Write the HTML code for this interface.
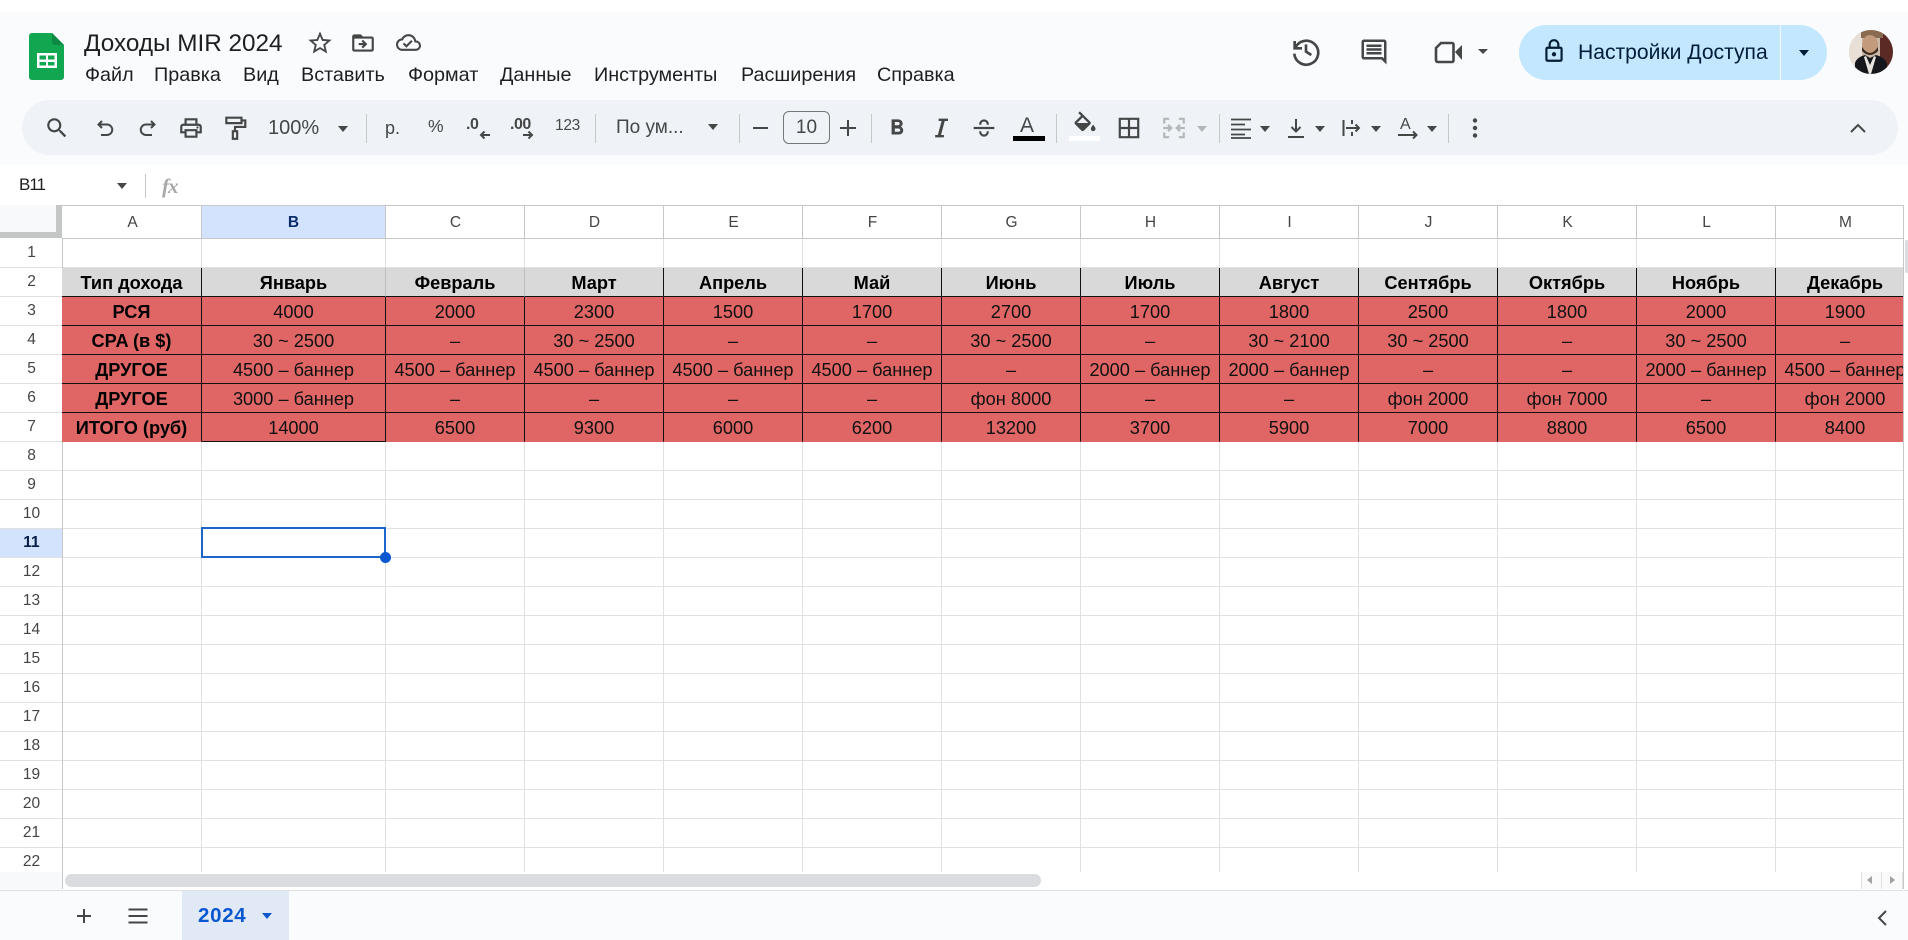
<!DOCTYPE html>
<html lang="ru">
<head>
<meta charset="utf-8">
<title>Доходы MIR 2024</title>
<style>
html,body{margin:0;padding:0;background:#fff}
body{position:relative;width:1908px;height:940px;overflow:hidden;font-family:"Liberation Sans",Arial,sans-serif;color:#1f1f1f}
.a,.i,.t,.c,.s{position:absolute}
.t{white-space:nowrap}
.c{width:0;height:0;border-left:5.5px solid transparent;border-right:5.5px solid transparent;border-top:6px solid #444746}
.s{width:1px;height:29px;top:114px;background:#c7c7c7}
.i{fill:#444746}
.st{fill:none;stroke:#444746;stroke-width:2}
.m{font-size:19.8px;top:62px;color:#1f1f1f;line-height:26px}
.tb{font-size:20px;top:115px;line-height:26px;color:#444746}
#tw{position:absolute;left:62px;top:268px;width:1841px;height:174px;overflow:hidden}
table{border-collapse:separate;border-spacing:0;table-layout:fixed;width:1853px}
td{box-sizing:border-box;height:29px;padding:2px 0 0;text-align:center;font-size:18.2px;line-height:26px;white-space:nowrap;overflow:hidden;background:#e06666;color:#111;border-right:1px solid #111;border-bottom:1px solid #111}
tr.h td,td.b{font-weight:bold;color:#000}
tr.h td{background:#d9d9d9;padding-top:3px;line-height:25px}
tr.h td.l{border-right-color:#bdbdbd}
tr.e td{border-bottom-color:#e06666}
tr.e td.k{border-bottom-color:#111}
.rh{position:absolute;left:0;width:63px;height:29px;line-height:29px;text-align:center;font-size:15.5px;color:#444}
.ch{position:absolute;top:206px;height:32px;line-height:33px;text-align:center;font-size:15.5px;color:#444;width:141px}
</style>
</head>
<body>
<!-- header bg -->
<div class="a" style="left:0;top:12px;width:1908px;height:153px;background:#f9fbfd"></div>
<div class="a" style="left:22px;top:100px;width:1876px;height:55px;border-radius:28px;background:#eff3f8"></div>

<!-- sheets logo -->
<svg class="i" style="left:29px;top:33px" width="35" height="47" viewBox="0 0 35 47">
<path d="M3 0H23L35 12V44a3 3 0 0 1-3 3H3a3 3 0 0 1-3-3V3a3 3 0 0 1 3-3z" fill="#11a650"/>
<path d="M23 0L35 12H26a3 3 0 0 1-3-3z" fill="#0c8a43"/>
<path d="M8 20H28V35H8z M10.500 22.500V26.500H17V22.500z M19 22.500V26.500H25.500V22.500z M10.500 29V32.500H17V29z M19 29V32.500H25.500V29z" fill="#fff" fill-rule="evenodd"/>
</svg>

<div class="t" style="left:84px;top:28px;font-size:24.3px;line-height:32px;color:#1f1f1f">Доходы MIR 2024</div>
<svg class="i" style="left:306px;top:29px" width="28" height="28" viewBox="0 0 24 24"><path d="M22 9.240l-7.190-.620L12 2 9.190 8.630 2 9.240l5.460 4.730L5.820 21 12 17.270 18.180 21l-1.630-7.030L22 9.240zM12 15.400l-3.760 2.270 1-4.280-3.320-2.880 4.380-.380L12 6.100l1.710 4.040 4.380.380-3.320 2.880 1 4.280L12 15.400z"/></svg>
<svg class="i" style="left:350px;top:30px" width="26" height="26" viewBox="0 0 24 24"><path d="M20 6h-8l-2-2H4c-1.100 0-2 .9-2 2v12c0 1.100.9 2 2 2h16c1.100 0 2-.9 2-2V8c0-1.100-.9-2-2-2zm0 12H4V8h16v10zm-8.010-9l-1.410 1.410L12.160 12H8v2h4.160l-1.590 1.590L11.990 17 16 13.010 11.990 9z"/></svg>
<svg class="i" style="left:396px;top:30px" width="25" height="25" viewBox="0 0 24 24"><path d="M19.350 10.040C18.670 6.590 15.640 4 12 4 9.110 4 6.600 5.640 5.350 8.040 2.340 8.360 0 10.910 0 14c0 3.310 2.690 6 6 6h13c2.760 0 5-2.240 5-5 0-2.640-2.050-4.780-4.650-4.960zM19 18H6c-2.210 0-4-1.790-4-4 0-2.050 1.530-3.760 3.560-3.970l1.070-.110.5-.950C8.080 7.140 9.940 6 12 6c2.620 0 4.880 1.860 5.390 4.430l.3 1.500 1.530.110c1.560.1 2.780 1.410 2.780 2.960 0 1.650-1.350 3-3 3zm-9-3.820l-2.090-2.090L6.500 13.500 10 17l6.010-6.010-1.410-1.410z"/></svg>

<!-- menu -->
<div class="t m" style="left:85px">Файл</div>
<div class="t m" style="left:154px">Правка</div>
<div class="t m" style="left:243px">Вид</div>
<div class="t m" style="left:301px">Вставить</div>
<div class="t m" style="left:408px">Формат</div>
<div class="t m" style="left:500px">Данные</div>
<div class="t m" style="left:594px">Инструменты</div>
<div class="t m" style="left:741px">Расширения</div>
<div class="t m" style="left:877px">Справка</div>

<!-- top right -->
<svg class="i" style="left:1290px;top:35px" width="32" height="32" viewBox="0 0 24 24"><path class="st" stroke-width="2" d="M3.500 4.500V10H9M4 9.500A9 9 0 1 1 3.200 14"/><path class="st" d="M12 7v5.500l4 2.500"/></svg>
<svg class="i" style="left:1359px;top:37px" width="30" height="30" viewBox="0 0 24 24"><path d="M21.990 4c0-1.100-.89-2-1.990-2H4c-1.100 0-2 .9-2 2v12c0 1.100.9 2 2 2h14l4 4-.010-18zM20 4v13.170L18.830 16H4V4h16zM6 12h12v2H6zm0-3h12v2H6zm0-3h12v2H6z"/></svg>
<svg class="i" style="left:1434px;top:41px" width="29" height="23" viewBox="0 0 29 23"><path d="M2 7L7 2H18a1.500 1.500 0 0 1 1.500 1.500V19.500A1.500 1.500 0 0 1 18 21H4a2 2 0 0 1-2-2z" fill="none" stroke="#444746" stroke-width="2.600"/><path d="M21 11L28 4V19z"/></svg>
<div class="c" style="left:1478px;top:49px;border-top-width:5px"></div>

<div class="a" style="left:1519px;top:25px;width:308px;height:55px;border-radius:28px;background:#c2e7ff"></div>
<div class="a" style="left:1780px;top:25px;width:1px;height:55px;background:#f3faff"></div>
<svg class="i" style="left:1541px;top:38px;fill:#041e35" width="26" height="26" viewBox="0 0 24 24"><path d="M18 8h-1V6c0-2.760-2.240-5-5-5S7 3.240 7 6v2H6c-1.100 0-2 .9-2 2v10c0 1.100.9 2 2 2h12c1.100 0 2-.9 2-2V10c0-1.100-.9-2-2-2zM9 6c0-1.660 1.340-3 3-3s3 1.340 3 3v2H9V6zm9 14H6V10h12v10zm-6-3c1.100 0 2-.9 2-2s-.9-2-2-2-2 .9-2 2 .9 2 2 2z"/></svg>
<div class="t" style="left:1578px;top:40px;font-size:21.1px;line-height:26px;color:#001d35">Настройки Доступа</div>
<div class="c" style="left:1799px;top:50px;border-top-color:#001d35"></div>

<!-- avatar -->
<svg class="a" style="left:1849px;top:30px" width="44" height="44" viewBox="0 0 44 44">
<defs><clipPath id="av"><circle cx="22" cy="22" r="22"/></clipPath></defs>
<g clip-path="url(#av)">
<rect width="44" height="44" fill="#c9b8a6"/>
<rect x="0" y="0" width="13" height="44" fill="#e8e0d6"/>
<rect x="31" y="0" width="13" height="44" fill="#5b2a24"/>
<rect x="12" y="0" width="22" height="8" fill="#8a6a50"/>
<ellipse cx="21" cy="15" rx="8" ry="10" fill="#c49a7c"/>
<path d="M13 17q8 12 16 0v4q-8 8-16 0z" fill="#3b2a22"/>
<path d="M6 44V33q2-6 10-8l5 3 6-3q8 2 11 8V44z" fill="#15171c"/>
<path d="M17 26l4 9 4-9 2 1-5 17h-2L15 27z" fill="#e9e4df"/>
</g>
</svg>

<!-- toolbar -->
<svg class="i" style="left:44px;top:115px" width="26" height="26" viewBox="0 0 24 24"><path d="M15.500 14h-.79l-.28-.27C15.410 12.590 16 11.110 16 9.500 16 5.910 13.090 3 9.500 3S3 5.910 3 9.500 5.910 16 9.500 16c1.610 0 3.090-.59 4.230-1.570l.27.28v.79l5 4.990L20.490 19l-4.990-5zm-6 0C7.010 14 5 11.990 5 9.500S7.010 5 9.500 5 14 7.010 14 9.500 11.990 14 9.500 14z"/></svg>
<svg class="i" style="left:93px;top:116px" width="24" height="24" viewBox="0 0 24 24"><path class="st" d="M9 5L5.500 8.500 9 12M6 8.500H14a4.800 4.800 0 0 1 0 10.500H8"/></svg>
<svg class="i" style="left:136px;top:116px" width="24" height="24" viewBox="0 0 24 24"><path class="st" d="M15 5l3.500 3.500L15 12M18 8.500H10a4.800 4.800 0 0 0 0 10.500H16"/></svg>
<svg class="i" style="left:178px;top:115px" width="26" height="26" viewBox="0 0 24 24"><path d="M19 8h-1V3H6v5H5c-1.660 0-3 1.340-3 3v6h4v4h12v-4h4v-6c0-1.660-1.340-3-3-3zM8 5h8v3H8V5zm8 12v2H8v-4h8v2zm2-2v-2H6v2H4v-4c0-.55.45-1 1-1h14c.55 0 1 .45 1 1v4h-2z"/><circle cx="18" cy="11.500" r="1"/></svg>
<svg class="i" style="left:222px;top:115px" width="26" height="26" viewBox="0 0 24 24"><path class="st" d="M4 2.500H18V7.500H4zM18 5H21.500V11H12V15"/><rect class="st" x="10" y="15" width="4" height="7"/></svg>
<div class="t tb" style="left:268px">100%</div>
<div class="c" style="left:338px;top:126px"></div>
<div class="s" style="left:366px"></div>
<div class="t tb" style="left:385px;font-size:18px">р.</div>
<div class="t tb" style="left:428px;font-size:17.5px;top:113px">%</div>
<div class="t tb" style="left:466px;top:112px;font-size:16px;font-weight:bold;letter-spacing:-.5px">.0</div>
<svg class="i" style="left:479px;top:129px" width="12" height="12" viewBox="0 0 12 12"><path class="st" d="M11 6H2M5.500 2.500L2 6l3.500 3.500"/></svg>
<div class="t tb" style="left:510px;top:112px;font-size:16px;font-weight:bold;letter-spacing:-.5px">.00</div>
<svg class="i" style="left:522px;top:129px" width="12" height="12" viewBox="0 0 12 12"><path class="st" d="M1 6H10M6.500 2.500L10 6l-3.500 3.500"/></svg>
<div class="t tb" style="left:555px;top:113px;font-size:15.500px;letter-spacing:-.3px">123</div>
<div class="s" style="left:595px"></div>
<div class="t tb" style="left:616px;font-size:19px">По ум...</div>
<div class="c" style="left:708px;top:124px"></div>
<div class="s" style="left:739px"></div>
<div class="a" style="left:753px;top:127px;width:15px;height:2px;background:#444746"></div>
<div class="a" style="left:783px;top:111px;width:45px;height:31px;border:1px solid #747775;border-radius:6px;text-align:center;line-height:31px;font-size:19px;color:#444746">10</div>
<svg class="i" style="left:837px;top:117px" width="22" height="22" viewBox="0 0 22 22"><path class="st" d="M11 3V19M3 11H19"/></svg>
<div class="s" style="left:871px"></div>
<svg class="i" style="left:884px;top:115px" width="26" height="26" viewBox="0 0 24 24"><path d="M15.600 10.790c.97-.67 1.650-1.770 1.650-2.790 0-2.260-1.750-4-4-4H7v14h7.040c2.090 0 3.710-1.700 3.710-3.790 0-1.520-.86-2.820-2.150-3.420zM10 6.500h3c.83 0 1.500.67 1.500 1.500s-.67 1.500-1.500 1.500h-3v-3zm3.500 9H10v-3h3.500c.83 0 1.500.67 1.500 1.500s-.67 1.500-1.500 1.500z"/></svg>
<svg class="i" style="left:927px;top:114px" width="28" height="28" viewBox="0 0 24 24"><path d="M10 4v2h2.500l-3.200 12H7v2h7.500v-2H12l3.200-12H18V4z"/></svg>
<svg class="i" style="left:971px;top:115px" width="26" height="26" viewBox="0 0 24 24"><path class="st" d="M2.500 12H21.500M8.500 9V8.500A3.500 3.500 0 0 1 15.500 8.500V9M8.500 15v.5a3.500 3.500 0 0 0 7 0V15"/></svg>
<div class="t" style="left:1020px;top:114px;font-size:21px;line-height:24px;color:#444746">A</div>
<div class="a" style="left:1013px;top:136px;width:32px;height:5px;background:#000"></div>
<div class="s" style="left:1056px"></div>
<svg class="i" style="left:1071px;top:111px" width="28" height="24" viewBox="0 0 24 20"><path d="M16.560 8.940L7.620 0 6.210 1.410l2.380 2.380-5.150 5.150c-.59.59-.59 1.540 0 2.120l5.500 5.500c.29.29.68.44 1.060.44s.77-.15 1.060-.44l5.500-5.500c.59-.58.59-1.530 0-2.120zM5.210 10L10 5.210 14.790 10H5.210zM19 11.500s-2 2.170-2 3.500c0 1.100.9 2 2 2s2-.9 2-2c0-1.330-2-3.500-2-3.500z"/></svg>
<div class="a" style="left:1069px;top:136px;width:31px;height:5px;background:#fff"></div>
<svg class="i" style="left:1116px;top:115px" width="26" height="26" viewBox="0 0 24 24"><path class="st" d="M3.500 3.500H20.500V20.500H3.500zM12 3.500V20.500M3.500 12H20.500"/></svg>
<svg class="i" style="left:1161px;top:115px" width="26" height="26" viewBox="0 0 24 24"><path class="st" style="stroke:#b4b6b8" d="M3 8V3.500H7.500M16.500 3.500H21V8M3 16V20.500H7.500M16.500 20.500H21V16M2 12H9M6.500 9l3 3-3 3M22 12H15M17.500 9l-3 3 3 3"/></svg>
<div class="c" style="left:1197px;top:126px;border-top-color:#b4b6b8"></div>
<div class="s" style="left:1219px"></div>
<svg class="i" style="left:1229px;top:116px" width="24" height="24" viewBox="0 0 24 24"><path class="st" d="M2 3.500H22M2 8.500H16M2 13.500H22M2 18.500H16M2 22H22" style="stroke-width:1.800"/></svg>
<div class="c" style="left:1260px;top:126px"></div>
<svg class="i" style="left:1284px;top:116px" width="24" height="24" viewBox="0 0 24 24"><path class="st" d="M12 3V15.500M7.500 11l4.500 4.500 4.500-4.500M4 21H20"/></svg>
<div class="c" style="left:1315px;top:126px"></div>
<svg class="i" style="left:1339px;top:116px" width="24" height="24" viewBox="0 0 24 24"><path class="st" stroke-width="1.700" d="M4.500 4V20M13 4V8M13 16V20M7 12H20M16.500 8.500L20 12l-3.500 3.500"/></svg>
<div class="c" style="left:1371px;top:126px"></div>
<div class="t" style="left:1400px;top:115px;font-size:16px;line-height:20px;color:#444746">A</div>
<svg class="i" style="left:1396px;top:128px" width="24" height="14" viewBox="0 0 24 14"><path class="st" stroke-width="1.700" d="M2 7H20M17 3.500L20.500 7 17 10.500"/></svg>
<div class="c" style="left:1427px;top:126px"></div>
<div class="s" style="left:1448px"></div>
<svg class="i" style="left:1463px;top:116px" width="24" height="24" viewBox="0 0 24 24"><circle cx="12" cy="4.500" r="2.200"/><circle cx="12" cy="12" r="2.200"/><circle cx="12" cy="19.500" r="2.200"/></svg>
<svg class="i" style="left:1846px;top:116px" width="24" height="24" viewBox="0 0 24 24"><path class="st" stroke-width="2.400" d="M5 16l7-7 7 7"/></svg>

<!-- formula bar -->
<div class="t" style="left:19px;top:172px;font-size:17px;line-height:26px;letter-spacing:-1px;color:#1f1f1f">B11</div>
<div class="c" style="left:117px;top:183px"></div>
<div class="a" style="left:145px;top:174px;width:1px;height:24px;background:#c7c7c7"></div>
<div class="t" style="left:162px;top:172px;font-family:'Liberation Serif',serif;font-style:italic;font-weight:bold;font-size:21px;line-height:28px;color:#a8a8a8;letter-spacing:-1px">fx</div>

<!-- grid -->
<div class="a" style="left:202px;top:205px;width:183px;height:33px;background:#d3e3fd"></div>
<div class="a" style="left:0;top:205px;width:56px;height:27px;background:#f8f9fa"></div>
<div class="a" style="left:0;top:232px;width:62px;height:6px;background:#c4c7c5"></div>
<div class="a" style="left:56px;top:205px;width:6px;height:33px;background:#c4c7c5"></div>
<div class="a" style="left:0;top:528px;width:62px;height:29px;background:#d3e3fd"></div>

<svg class="a" style="left:0;top:0" width="1908" height="940" shape-rendering="crispEdges">
<path fill="none" stroke="#e1e1e1" d="M0 267.500H1903M0 296.500H62M0 325.500H62M0 354.500H62M0 383.500H62M0 412.500H62M0 441.500H1903M0 470.500H1903M0 499.500H1903M0 528.500H1903M0 557.500H1903M0 586.500H1903M0 615.500H1903M0 644.500H1903M0 673.500H1903M0 702.500H1903M0 731.500H1903M0 760.500H1903M0 789.500H1903M0 818.500H1903M0 847.500H1903"/>
<path fill="none" stroke="#e1e1e1" d="M201.500 238V872M385.500 238V872M524.500 238V872M663.500 238V872M802.500 238V872M941.500 238V872M1080.500 238V872M1219.500 238V872M1358.500 238V872M1497.500 238V872M1636.500 238V872M1775.500 238V872"/>
<path fill="none" stroke="#c7c7c7" d="M62.500 238V889M62 238.500H1903M62 205.500H1903M201.500 205V238M385.500 205V238M524.500 205V238M663.500 205V238M802.500 205V238M941.500 205V238M1080.500 205V238M1219.500 205V238M1358.500 205V238M1497.500 205V238M1636.500 205V238M1775.500 205V238M1903.500 205V889"/>
</svg>

<!-- col heads -->
<div class="ch" style="left:62px">A</div>
<div class="ch" style="left:202px;width:183px;font-weight:bold;color:#0b2e6b">B</div>
<div class="ch" style="left:385px">C</div>
<div class="ch" style="left:524px">D</div>
<div class="ch" style="left:663px">E</div>
<div class="ch" style="left:802px">F</div>
<div class="ch" style="left:941px">G</div>
<div class="ch" style="left:1080px">H</div>
<div class="ch" style="left:1219px">I</div>
<div class="ch" style="left:1358px">J</div>
<div class="ch" style="left:1497px">K</div>
<div class="ch" style="left:1636px">L</div>
<div class="ch" style="left:1775px">M</div>

<!-- row heads -->
<div class="rh" style="top:238px">1</div>
<div class="rh" style="top:267px">2</div>
<div class="rh" style="top:296px">3</div>
<div class="rh" style="top:325px">4</div>
<div class="rh" style="top:354px">5</div>
<div class="rh" style="top:383px">6</div>
<div class="rh" style="top:412px">7</div>
<div class="rh" style="top:441px">8</div>
<div class="rh" style="top:470px">9</div>
<div class="rh" style="top:499px">10</div>
<div class="rh" style="top:528px;font-weight:bold;color:#041e49">11</div>
<div class="rh" style="top:557px">12</div>
<div class="rh" style="top:586px">13</div>
<div class="rh" style="top:615px">14</div>
<div class="rh" style="top:644px">15</div>
<div class="rh" style="top:673px">16</div>
<div class="rh" style="top:702px">17</div>
<div class="rh" style="top:731px">18</div>
<div class="rh" style="top:760px">19</div>
<div class="rh" style="top:789px">20</div>
<div class="rh" style="top:818px">21</div>
<div class="rh" style="top:847px">22</div>

<!-- data -->
<div id="tw">
<table>
<colgroup><col style="width:140px"><col style="width:184px"><col span="11" style="width:139px"></colgroup>
<tr class="h"><td>Тип дохода</td><td class="l">Январь</td><td class="l">Февраль</td><td>Март</td><td>Апрель</td><td>Май</td><td>Июнь</td><td>Июль</td><td>Август</td><td>Сентябрь</td><td>Октябрь</td><td>Ноябрь</td><td>Декабрь</td></tr>
<tr><td class="b">РСЯ</td><td>4000</td><td>2000</td><td>2300</td><td>1500</td><td>1700</td><td>2700</td><td>1700</td><td>1800</td><td>2500</td><td>1800</td><td>2000</td><td>1900</td></tr>
<tr><td class="b">CPA (в $)</td><td>30 ~ 2500</td><td>–</td><td>30 ~ 2500</td><td>–</td><td>–</td><td>30 ~ 2500</td><td>–</td><td>30 ~ 2100</td><td>30 ~ 2500</td><td>–</td><td>30 ~ 2500</td><td>–</td></tr>
<tr><td class="b">ДРУГОЕ</td><td>4500 – баннер</td><td>4500 – баннер</td><td>4500 – баннер</td><td>4500 – баннер</td><td>4500 – баннер</td><td>–</td><td>2000 – баннер</td><td>2000 – баннер</td><td>–</td><td>–</td><td>2000 – баннер</td><td>4500 – баннер</td></tr>
<tr><td class="b">ДРУГОЕ</td><td>3000 – баннер</td><td>–</td><td>–</td><td>–</td><td>–</td><td>фон 8000</td><td>–</td><td>–</td><td>фон 2000</td><td>фон 7000</td><td>–</td><td>фон 2000</td></tr>
<tr class="e"><td class="b">ИТОГО (руб)</td><td class="k">14000</td><td>6500</td><td>9300</td><td>6000</td><td>6200</td><td>13200</td><td>3700</td><td>5900</td><td>7000</td><td>8800</td><td>6500</td><td>8400</td></tr>
</table>
</div>

<!-- selection -->
<div class="a" style="left:201px;top:527px;width:185px;height:31px;box-sizing:border-box;border:2px solid #1a66c9"></div>
<div class="a" style="left:380px;top:552px;width:11px;height:11px;border-radius:50%;background:#0b57d0;border:0"></div>

<!-- scrollbars -->
<div class="a" style="left:63px;top:872px;width:1840px;height:18px;background:#fff"></div>
<div class="a" style="left:0;top:872px;width:62px;height:18px;background:#f8f9fa"></div>
<div class="a" style="left:65px;top:874px;width:976px;height:13px;border-radius:7px;background:#dadce0"></div>
<div class="a" style="left:1861px;top:872px;width:21px;height:17px;box-sizing:border-box;border-left:1px solid #e1e1e1;border-right:1px solid #e1e1e1;background:#fafafa"></div>
<div class="a" style="left:1882px;top:872px;width:21px;height:17px;box-sizing:border-box;border-right:1px solid #e1e1e1;background:#fafafa"></div>
<div class="a" style="left:1867px;top:876px;width:0;height:0;border-top:4px solid transparent;border-bottom:4px solid transparent;border-right:5px solid #a0a0a0"></div>
<div class="a" style="left:1890px;top:876px;width:0;height:0;border-top:4px solid transparent;border-bottom:4px solid transparent;border-left:5px solid #a0a0a0"></div>
<div class="a" style="left:1905px;top:240px;width:3px;height:33px;background:#dadce0;border-radius:2px 0 0 2px"></div>

<!-- bottom bar -->
<div class="a" style="left:0;top:890px;width:1908px;height:50px;background:#f9fbfd;border-top:1px solid #e0e0e0;box-sizing:border-box"></div>
<svg class="i" style="left:73px;top:905px" width="22" height="22" viewBox="0 0 22 22"><path class="st" d="M11 4V18M4 11H18" stroke-width="2.200"/></svg>
<svg class="i" style="left:127px;top:905px" width="22" height="22" viewBox="0 0 22 22"><path class="st" d="M1.500 4.500H20.500M1.500 11H20.500M1.500 17.500H20.500" stroke-width="2.200"/></svg>
<div class="a" style="left:182px;top:891px;width:107px;height:49px;background:#e1e9f7"></div>
<div class="t" style="left:198px;top:903px;font-size:20.500px;line-height:26px;font-weight:bold;color:#0b57d0;letter-spacing:.7px">2024</div>
<div class="c" style="left:262px;top:913px;border-top-color:#0b57d0"></div>
<svg class="i" style="left:1870px;top:906px" width="24" height="24" viewBox="0 0 24 24"><path class="st" stroke-width="2.400" d="M16 5l-7 7 7 7"/></svg>
</body>
</html>
